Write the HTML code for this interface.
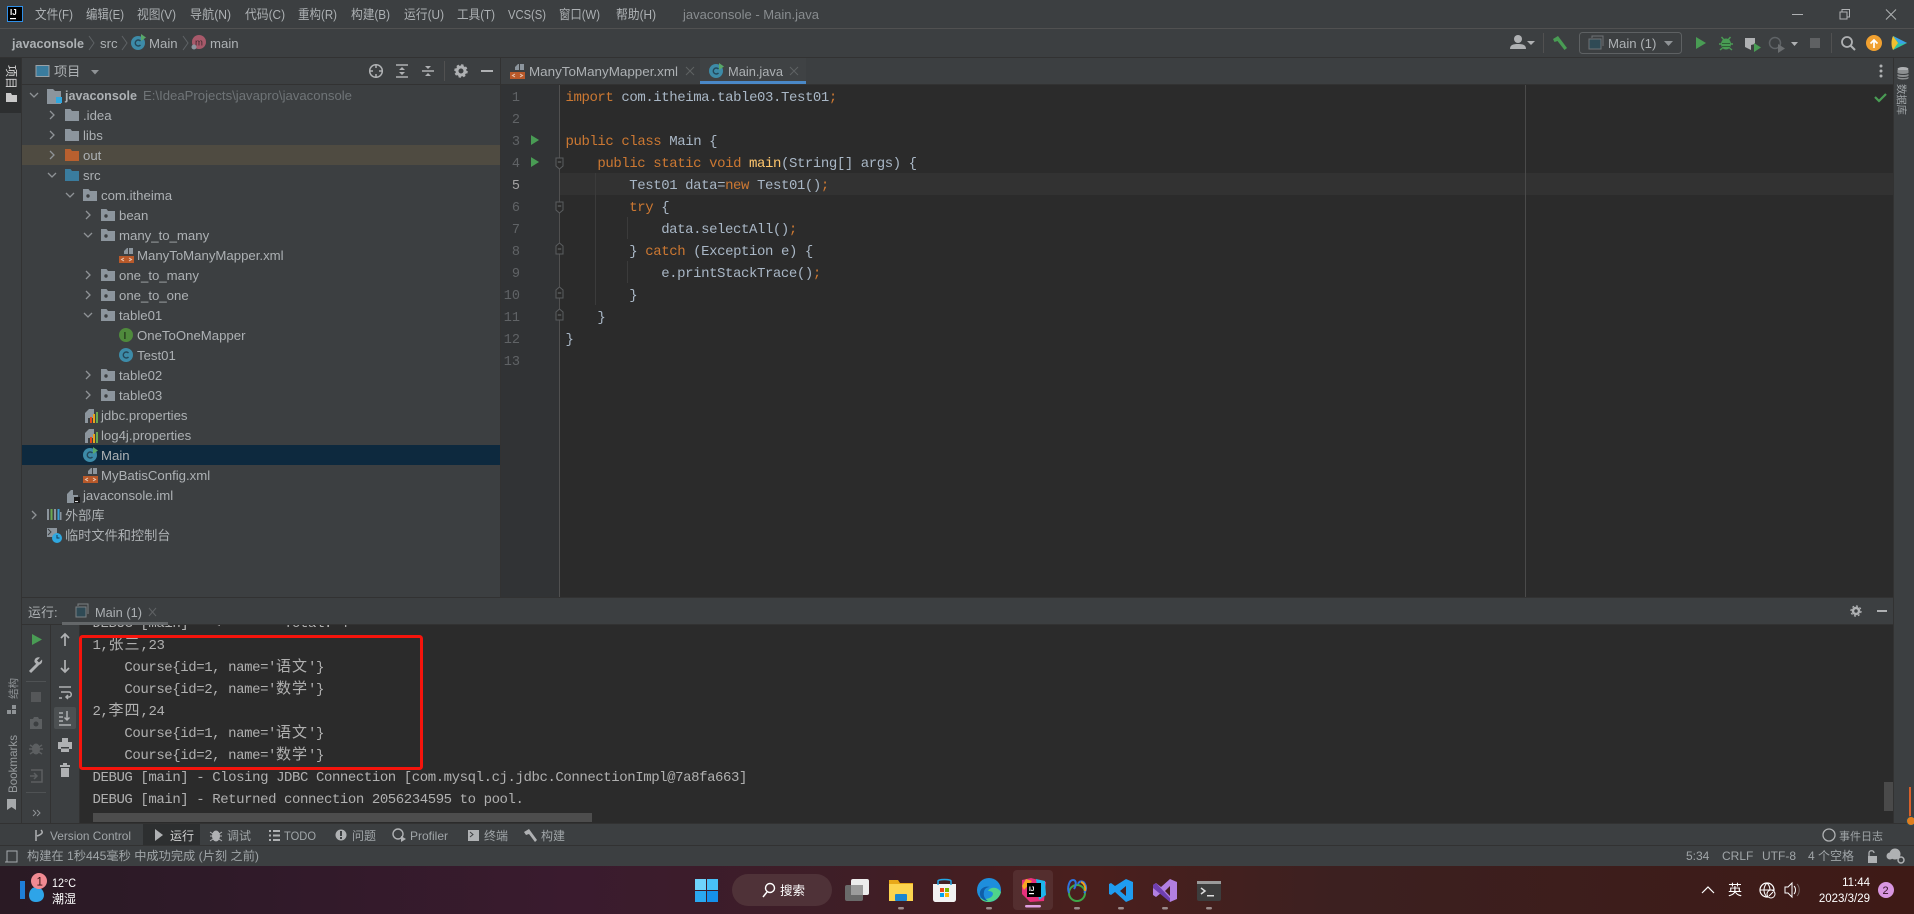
<!DOCTYPE html>
<html lang="zh"><head><meta charset="utf-8"><title>javaconsole - Main.java</title>
<style>
html,body{margin:0;padding:0;width:1914px;height:914px;overflow:hidden;background:#3c3f41}
svg{display:block;position:absolute;left:0;top:0}
text{font-family:"Liberation Sans","Noto Sans CJK SC",sans-serif;font-size:13.2px;fill:#adb1b4;white-space:pre}
.m{font-family:"Liberation Mono","Noto Sans CJK SC",monospace;font-size:14px;letter-spacing:-.42px;fill:#a9b7c6}
.k{fill:#cc7832}.f{fill:#ffc66d}
.n{font-family:"Liberation Mono",monospace;font-size:13.5px;fill:#606366;text-anchor:end}
.c{fill:#b0b0b0}
.z{font-size:15px;letter-spacing:1px}
.b{font-size:12px;fill:#a0a5a8}
.w{fill:#fff;font-size:12px}
</style></head><body>
<svg width="1914" height="914" viewBox="0 0 1914 914" xmlns="http://www.w3.org/2000/svg">
<defs>
<linearGradient id="tb" x1="0" x2="1" y1="0" y2="0">
<stop offset="0" stop-color="#2a1a24"/><stop offset=".1" stop-color="#2e1a28"/><stop offset=".3" stop-color="#3a1b2e"/><stop offset=".45" stop-color="#3f1e26"/><stop offset=".57" stop-color="#4a1f1d"/><stop offset=".7" stop-color="#3c2020"/><stop offset="1" stop-color="#3e1a16"/>
</linearGradient>
<symbol id="fo" viewBox="0 0 14 12" overflow="visible"><path d="M0 0h5.500l1.500 2h7v10H0z" fill="#8c959d"/></symbol>
<symbol id="pk" viewBox="0 0 14 12" overflow="visible"><path d="M0 0h5.500l1.500 2h7v10H0z" fill="#8c959d"/><circle cx="5" cy="7" r="1.700" fill="#3c3f41"/></symbol>
<symbol id="xm" viewBox="0 0 15 15" overflow="visible"><path d="M5 6V3l3-3h1v6zM10 0h4v6h-4z" fill="#8c959d"/><rect y="8" width="15" height="7" fill="#b8592a"/><path d="M5 10l-2.500 1.500L5 13M10 10l2.500 1.500L10 13" fill="none" stroke="#e8c9b5"/></symbol>
<symbol id="cc" viewBox="0 0 14 14" overflow="visible"><circle cx="7" cy="7" r="7" fill="#3d8ba8"/><path d="M9.500 5A3 3 0 1 0 9.500 9" fill="none" stroke="#24485a" stroke-width="1.400"/></symbol>
<symbol id="pr" viewBox="0 0 14 15" overflow="visible"><path d="M0 15V5l4-4h2v5h-3v9z M6 1h3v5H6z" fill="#8c959d"/><rect x="3" y="6" width="5" height="4" fill="#8c959d"/><rect x="5" y="9" width="2" height="6" fill="#e0481e"/><rect x="8" y="6" width="2" height="9" fill="#e8a41e"/><rect x="11" y="4" width="2" height="11" fill="#6aa84f"/></symbol>
<symbol id="ch" viewBox="0 0 10 10" overflow="visible"><path d="M3 1l4 4-4 4" fill="none" stroke="#8f9396" stroke-width="1.300"/></symbol>
<symbol id="cd" viewBox="0 0 10 10" overflow="visible"><path d="M1 3l4 4 4-4" fill="none" stroke="#8f9396" stroke-width="1.300"/></symbol>
<symbol id="fd" viewBox="0 0 10 22" overflow="visible"><path d="M1 6h7v8l-3.500 3L1 14z" fill="#2b2b2b" stroke="#5a5d5f"/><path d="M2.800 10h3.400" stroke="#6d7072"/></symbol>
<symbol id="fu" viewBox="0 0 10 22" overflow="visible"><path d="M1 14V6l3.500-3L8 6v8z" fill="#2b2b2b" stroke="#5a5d5f"/><path d="M2.800 9h3.400" stroke="#6d7072"/></symbol>
<symbol id="rn" viewBox="0 0 10 12" overflow="visible"><path d="M0 0l9 5.500L0 11z" fill="#499c54"/></symbol>
</defs>

<!-- Chrome backgrounds -->
<rect width="1914" height="866" fill="#3c3f41"/>
<rect y="28" width="1914" height="1" fill="#515151"/>
<rect y="57" width="1914" height="1" fill="#323232"/>
<rect x="0" y="58" width="21" height="55" fill="#2d2f30"/>
<rect x="21" y="58" width="1" height="765" fill="#323232"/>
<rect x="1893" y="58" width="1" height="765" fill="#323232"/>
<rect x="22" y="84" width="478" height="1" fill="#323232"/>
<rect x="22" y="145" width="478" height="20" fill="#4f4b41"/>
<rect x="22" y="445" width="478" height="20" fill="#0d293e"/>
<rect x="500" y="58" width="1" height="539" fill="#323232"/>

<!-- Editor -->
<rect x="501" y="84" width="1392" height="513" fill="#2b2b2b"/>
<rect x="501" y="84" width="1392" height="1" fill="#323232"/>
<rect x="501" y="85" width="58" height="512" fill="#313335"/>
<rect x="559" y="85" width="1" height="512" fill="#505050"/>
<rect x="560" y="173" width="1333" height="22" fill="#323232"/>
<rect x="1525" y="85" width="1" height="512" fill="#4a4a4a"/>
<rect x="595" y="173" width="1" height="132" fill="#3b3b3b"/>
<rect x="627" y="217" width="1" height="22" fill="#3b3b3b"/>
<rect x="627" y="261" width="1" height="22" fill="#3b3b3b"/>
<!-- tabs -->
<use href="#xm" x="510" y="64" width="15" height="15"/>
<text x="529" y="76" textLength="149" lengthAdjust="spacingAndGlyphs">ManyToManyMapper.xml</text>
<path d="M686 67l8 8m0-8l-8 8" stroke="#5f6264" stroke-width="1"/>
<rect x="700" y="58" width="106" height="26" fill="#3f4244"/>
<rect x="700" y="81" width="106" height="3" fill="#4a88c7"/>
<use href="#cc" x="709" y="64" width="14" height="14"/>
<path d="M719 63l5 3.500-5 3.500z" fill="#59a869"/>
<text x="728" y="76" textLength="55" lengthAdjust="spacingAndGlyphs">Main.java</text>
<path d="M790 67l8 8m0-8l-8 8" stroke="#5f6264" stroke-width="1"/>
<circle cx="1881" cy="66" r="1.500" fill="#afb1b3"/><circle cx="1881" cy="71" r="1.500" fill="#afb1b3"/><circle cx="1881" cy="76" r="1.500" fill="#afb1b3"/>
<path d="M1875 97l4 4 7-7" fill="none" stroke="#499c54" stroke-width="2.200"/>

<!-- Line numbers -->
<text class="n" x="520" y="101">1</text><text class="n" x="520" y="123">2</text><text class="n" x="520" y="145">3</text><text class="n" x="520" y="167">4</text><text class="n" x="520" y="189" style="fill:#a4a3a3">5</text><text class="n" x="520" y="211">6</text><text class="n" x="520" y="233">7</text><text class="n" x="520" y="255">8</text><text class="n" x="520" y="277">9</text><text class="n" x="520" y="299">10</text><text class="n" x="520" y="321">11</text><text class="n" x="520" y="343">12</text><text class="n" x="520" y="365">13</text>
<use href="#rn" x="531" y="135" width="9" height="11"/>
<use href="#rn" x="531" y="157" width="9" height="11"/>
<use href="#fd" x="555" y="152" width="10" height="22"/>
<use href="#fd" x="555" y="196" width="10" height="22"/>
<use href="#fu" x="555" y="240" width="10" height="22"/>
<use href="#fu" x="555" y="284" width="10" height="22"/>
<use href="#fu" x="555" y="306" width="10" height="22"/>

<!-- Code -->
<text class="m" x="565.500" y="101"><tspan class="k">import</tspan> com.itheima.table03.Test01<tspan class="k">;</tspan></text>
<text class="m" x="565.500" y="145"><tspan class="k">public class</tspan> Main {</text>
<text class="m" x="597.400" y="167"><tspan class="k">public static void</tspan> <tspan class="f">main</tspan>(String[] args) {</text>
<text class="m" x="629.300" y="189">Test01 data=<tspan class="k">new</tspan> Test01()<tspan class="k">;</tspan></text>
<text class="m" x="629.300" y="211"><tspan class="k">try</tspan> {</text>
<text class="m" x="661.200" y="233">data.selectAll()<tspan class="k">;</tspan></text>
<text class="m" x="629.300" y="255">} <tspan class="k">catch</tspan> (Exception e) {</text>
<text class="m" x="661.200" y="277">e.printStackTrace()<tspan class="k">;</tspan></text>
<text class="m" x="629.300" y="299">}</text>
<text class="m" x="597.400" y="321">}</text>
<text class="m" x="565.500" y="343">}</text>

<!-- Title bar -->
<rect x="7.500" y="6.500" width="15" height="15" fill="#000" stroke="#2f8fe8" stroke-width="1"/>
<text x="10" y="15" style="font-size:8px;font-weight:bold;fill:#fff">IJ</text><rect x="10" y="18" width="6" height="1.200" fill="#fff"/>
<text x="35" y="19" textLength="38" lengthAdjust="spacingAndGlyphs">文件(F)</text>
<text x="86" y="19" textLength="38" lengthAdjust="spacingAndGlyphs">编辑(E)</text>
<text x="137" y="19" textLength="39" lengthAdjust="spacingAndGlyphs">视图(V)</text>
<text x="190" y="19" textLength="41" lengthAdjust="spacingAndGlyphs">导航(N)</text>
<text x="245" y="19" textLength="40" lengthAdjust="spacingAndGlyphs">代码(C)</text>
<text x="298" y="19" textLength="39" lengthAdjust="spacingAndGlyphs">重构(R)</text>
<text x="351" y="19" textLength="39" lengthAdjust="spacingAndGlyphs">构建(B)</text>
<text x="404" y="19" textLength="40" lengthAdjust="spacingAndGlyphs">运行(U)</text>
<text x="457" y="19" textLength="38" lengthAdjust="spacingAndGlyphs">工具(T)</text>
<text x="508" y="19" textLength="38" lengthAdjust="spacingAndGlyphs">VCS(S)</text>
<text x="559" y="19" textLength="41" lengthAdjust="spacingAndGlyphs">窗口(W)</text>
<text x="616" y="19" textLength="40" lengthAdjust="spacingAndGlyphs">帮助(H)</text>
<text x="683" y="19" textLength="136" lengthAdjust="spacingAndGlyphs" style="fill:#888c8f;font-size:12.800px">javaconsole - Main.java</text>
<rect x="1792" y="14" width="11" height="1" fill="#afb1b3"/>
<path d="M1840 12h7v7h-7zM1842 12v-2.500h7.500v7.500H1847" fill="none" stroke="#afb1b3"/>
<path d="M1886 9.500l10 10m0-10l-10 10" stroke="#afb1b3"/>

<!-- Nav bar -->
<text x="12" y="48" textLength="72" lengthAdjust="spacingAndGlyphs" style="font-weight:bold">javaconsole</text>
<path d="M89 36l5 7-5 7M122 36l5 7-5 7M183 36l5 7-5 7" fill="none" stroke="#5f6366"/>
<text x="100" y="48">src</text>
<use href="#cc" x="131" y="36" width="14" height="14"/>
<path d="M141 34l5 3.500-5 3.500z" fill="#59a869"/>
<text x="149" y="48">Main</text>
<circle cx="199" cy="42" r="7" fill="#a8596a"/><text x="195" y="45.500" style="font-size:9.500px;fill:#3c2a2e">m</text>
<circle cx="194" cy="47" r="2.500" fill="#8c959d"/>
<text x="210" y="48">main</text>

<!-- Top right toolbar -->
<circle cx="1518" cy="39" r="4" fill="#afb1b3"/><path d="M1510 49c0-4 3-5 8-5s8 1 8 5z" fill="#afb1b3"/>
<path d="M1527 41h8l-4 4z" fill="#afb1b3"/>
<rect x="1543" y="33" width="1" height="20" fill="#515151"/>
<path d="M1553 39l5-3 9 12-2.500 2-7-9-3 1z" fill="#499c54"/>
<rect x="1579.500" y="32.500" width="102" height="21" rx="3" fill="none" stroke="#5e6163"/>
<rect x="1589" y="39" width="12" height="10" fill="#2f4a55" stroke="#6e7275"/><path d="M1592 38v-2h11v10" fill="none" stroke="#6e7275"/>
<text x="1608" y="48">Main (1)</text>
<path d="M1664 41h9l-4.500 5z" fill="#8f9396"/>
<path d="M1696 37l10 6-10 6z" fill="#499c54"/>
<ellipse cx="1726" cy="44" rx="5" ry="5.500" fill="#499c54"/><path d="M1721.500 37l2.500 3m6.500-3l-2.500 3M1719 44h14M1720 50l2.500-2m9.500 2l-2.500-2" stroke="#499c54" stroke-width="1.400"/><path d="M1722 43.500h8M1722 46.500h8" stroke="#2f5f36"/>
<path d="M1745 38h10v6l-4 1v5l-6-3z" fill="#afb1b3"/><path d="M1754 43l7 4.500-7 4.500z" fill="#499c54"/>
<circle cx="1775" cy="43" r="5.500" fill="none" stroke="#5f6366" stroke-width="1.500"/><path d="M1778 44l7 4.500-7 4.500z" fill="#6b6e70"/>
<path d="M1791 42h7l-3.500 4z" fill="#afb1b3"/>
<rect x="1810" y="38" width="10" height="10" fill="#5f6163"/>
<rect x="1831" y="33" width="1" height="20" fill="#515151"/>
<circle cx="1847" cy="42" r="5" fill="none" stroke="#afb1b3" stroke-width="1.800"/><path d="M1851 46l4 4" stroke="#afb1b3" stroke-width="2"/>
<circle cx="1874" cy="43" r="8" fill="#f0a030"/><path d="M1874 48v-8m-3.500 3.500l3.500-3.500 3.500 3.500" fill="none" stroke="#fff" stroke-width="1.700"/>
<path d="M1893 36l14 7-14 7z" fill="#2ec4a0"/><path d="M1893 36c-2 4-2 10 0 14l5-7z" fill="#f0c030"/><path d="M1893 36l14 7-7 1z" fill="#3ba0e8"/>

<!-- Project header -->
<rect x="36" y="65.500" width="13" height="11" fill="#3a7c9e" stroke="#9aa1a6"/>
<text x="54" y="76">项目</text>
<path d="M91 70h8l-4 4.500z" fill="#8f9396"/>
<circle cx="376" cy="71" r="6.300" fill="none" stroke="#afb1b3" stroke-width="1.500"/><path d="M376 64v4m0 6v4m-7-7h4m6 0h4" stroke="#afb1b3" stroke-width="1.500"/>
<path d="M396 65h12M396 77h12" stroke="#afb1b3" stroke-width="1.500"/><path d="M402 67l3 3h-6zM402 75l3-3h-6z" fill="#afb1b3"/>
<path d="M422 71h12" stroke="#afb1b3" stroke-width="1.500"/><path d="M428 69l-3-3h6zM428 73l-3 3h6z" fill="#afb1b3"/>
<rect x="444" y="61" width="1" height="20" fill="#515151"/>
<circle cx="461" cy="71" r="4" fill="none" stroke="#afb1b3" stroke-width="3"/><circle cx="461" cy="71" r="6" fill="none" stroke="#afb1b3" stroke-width="1.500" stroke-dasharray="2.500 2.200"/>
<rect x="481" y="70" width="12" height="2" fill="#afb1b3"/>

<!-- Left stripe -->
<text transform="translate(7 65) rotate(90)" style="font-size:12px;fill:#d6d6d6">项目</text>
<path d="M6 93h5l1 2h5v7H6z" fill="#c9c9c9"/>
<text transform="translate(17 699) rotate(-90)" style="font-size:10.500px;fill:#8f9396" textLength="21">结构</text>
<path d="M7 710h4v4H7zM12 710h4v4h-4zM12 705h4v4h-4z" fill="#8f9396"/>
<text transform="translate(17 793) rotate(-90)" textLength="58" lengthAdjust="spacingAndGlyphs" style="font-size:12px;fill:#969a9d">Bookmarks</text>
<path d="M7 799h9v11l-4.500-3-4.500 3z" fill="#a6a9ab"/>

<!-- Right stripe -->
<ellipse cx="1903" cy="69" rx="5.500" ry="2" fill="#afb1b3"/><path d="M1897.500 70v8c0 2 11 2 11 0v-8" fill="#8c8f91"/>
<path d="M1897.500 73c0 2 11 2 11 0M1897.500 76c0 2 11 2 11 0" stroke="#3c3f41" fill="none"/>
<text transform="translate(1898 84) rotate(90)" style="font-size:10.500px;fill:#a0a5a8" textLength="31">数据库</text>

<!-- Tree -->
<use href="#cd" x="29" y="90" width="10" height="10"/>
<path d="M47 89h6l2 2h6v13H47z" fill="#8c959d"/><rect x="56" y="97" width="6" height="6" fill="#2fa8e0"/>
<text x="65" y="100" textLength="72" lengthAdjust="spacingAndGlyphs" style="font-weight:bold">javaconsole</text>
<text x="143" y="100" textLength="209" lengthAdjust="spacingAndGlyphs" style="fill:#6f7477;font-size:12.800px">E:\IdeaProjects\javapro\javaconsole</text>

<use href="#ch" x="47" y="110" width="10" height="10"/><use href="#fo" x="65" y="109" width="14" height="12"/><text x="83" y="120">.idea</text>
<use href="#ch" x="47" y="130" width="10" height="10"/><use href="#fo" x="65" y="129" width="14" height="12"/><text x="83" y="140">libs</text>
<use href="#ch" x="47" y="150" width="10" height="10"/><path d="M65 149h5.500l1.500 2h7v10H65z" fill="#b8602f"/><text x="83" y="160">out</text>
<use href="#cd" x="47" y="170" width="10" height="10"/><path d="M65 169h5.500l1.500 2h7v10H65z" fill="#3a7c9e"/><text x="83" y="180">src</text>
<use href="#cd" x="65" y="190" width="10" height="10"/><use href="#pk" x="83" y="189" width="14" height="12"/><text x="101" y="200">com.itheima</text>
<use href="#ch" x="83" y="210" width="10" height="10"/><use href="#pk" x="101" y="209" width="14" height="12"/><text x="119" y="220">bean</text>
<use href="#cd" x="83" y="230" width="10" height="10"/><use href="#pk" x="101" y="229" width="14" height="12"/><text x="119" y="240">many_to_many</text>
<use href="#xm" x="119" y="248" width="15" height="15"/><text x="137" y="260">ManyToManyMapper.xml</text>
<use href="#ch" x="83" y="270" width="10" height="10"/><use href="#pk" x="101" y="269" width="14" height="12"/><text x="119" y="280">one_to_many</text>
<use href="#ch" x="83" y="290" width="10" height="10"/><use href="#pk" x="101" y="289" width="14" height="12"/><text x="119" y="300">one_to_one</text>
<use href="#cd" x="83" y="310" width="10" height="10"/><use href="#pk" x="101" y="309" width="14" height="12"/><text x="119" y="320">table01</text>
<circle cx="126" cy="335" r="7" fill="#4f8a3c"/><text x="123.500" y="339" style="font-size:10px;font-weight:bold;fill:#26401e">I</text><text x="137" y="340">OneToOneMapper</text>
<use href="#cc" x="119" y="348" width="14" height="14"/><text x="137" y="360">Test01</text>
<use href="#ch" x="83" y="370" width="10" height="10"/><use href="#pk" x="101" y="369" width="14" height="12"/><text x="119" y="380">table02</text>
<use href="#ch" x="83" y="390" width="10" height="10"/><use href="#pk" x="101" y="389" width="14" height="12"/><text x="119" y="400">table03</text>
<use href="#pr" x="85" y="408" width="14" height="15"/><text x="101" y="420">jdbc.properties</text>
<use href="#pr" x="85" y="428" width="14" height="15"/><text x="101" y="440">log4j.properties</text>
<use href="#cc" x="83" y="448" width="14" height="14"/><path d="M93 447l5 3.500-5 3.500z" fill="#59a869"/><text x="101" y="460">Main</text>
<use href="#xm" x="83" y="468" width="15" height="15"/><text x="101" y="480">MyBatisConfig.xml</text>
<path d="M67 503v-9l4-4h2v5h5v8z" fill="#8c959d"/><rect x="74" y="497" width="6" height="6" fill="#1b1b1b"/><rect x="75" y="501" width="3" height="1" fill="#ddd"/><text x="83" y="500">javaconsole.iml</text>
<use href="#ch" x="29" y="510" width="10" height="10"/>
<rect x="47" y="509" width="2" height="11" fill="#8c959d"/><rect x="50.500" y="509" width="2" height="11" fill="#6aa84f"/><rect x="54" y="509" width="2" height="11" fill="#8c959d"/><rect x="57.500" y="509" width="2" height="11" fill="#389fd6"/><rect x="60" y="512" width="1.500" height="8" fill="#8c959d"/>
<text x="65" y="520">外部库</text>
<rect x="47" y="528" width="10" height="9" fill="#8c959d"/><path d="M48 529l3 3-3 3" stroke="#3c3f41" fill="none"/><circle cx="57" cy="538" r="5" fill="#2fa8e0"/><path d="M57 535v3h2.500" stroke="#16394f" fill="none"/>
<text x="65" y="540">临时文件和控制台</text>

<!-- Run panel -->
<rect x="22" y="597" width="1871" height="1" fill="#323232"/>
<text x="28" y="617" style="font-size:13px">运行:</text>
<rect x="76" y="607" width="10" height="10" fill="#2f4a55" stroke="#7b8083"/><path d="M78 606v-2h10v10" fill="none" stroke="#7b8083"/>
<text x="95" y="617" textLength="47" lengthAdjust="spacingAndGlyphs" style="font-size:13px">Main (1)</text>
<path d="M149 608l7 8m0-8l-7 8" stroke="#5f6264"/>
<rect x="22" y="624" width="1871" height="1" fill="#323232"/>
<circle cx="1856" cy="611" r="3" fill="none" stroke="#afb1b3" stroke-width="2.500"/><circle cx="1856" cy="611" r="5" fill="none" stroke="#afb1b3" stroke-width="1.300" stroke-dasharray="2 1.900"/>
<rect x="1877" y="610" width="10" height="2" fill="#afb1b3"/>

<rect x="80" y="625" width="1813" height="198" fill="#2b2b2b"/>
<rect x="50" y="625" width="1" height="198" fill="#323232"/>
<rect x="79" y="625" width="1" height="198" fill="#323232"/>
<rect x="1884" y="782" width="9" height="29" fill="#4a4a4a"/>
<rect x="93" y="813" width="499" height="9" fill="#4d4d4d"/>

<clipPath id="cl"><rect x="80" y="625" width="1813" height="198"/></clipPath>
<g clip-path="url(#cl)">
<text class="m c" x="92.500" y="627">DEBUG [main] - &lt;==      Total: 4</text>
<text class="m c" x="92.500" y="649">1,<tspan class="z" x="108.500">张三</tspan><tspan x="140.500">,23</tspan></text>
<text class="m c" x="124.400" y="671">Course{id=1, name='<tspan class="z" x="276">语文</tspan><tspan x="308">'}</tspan></text>
<text class="m c" x="124.400" y="693">Course{id=2, name='<tspan class="z" x="276">数学</tspan><tspan x="308">'}</tspan></text>
<text class="m c" x="92.500" y="715">2,<tspan class="z" x="108.500">李四</tspan><tspan x="140.500">,24</tspan></text>
<text class="m c" x="124.400" y="737">Course{id=1, name='<tspan class="z" x="276">语文</tspan><tspan x="308">'}</tspan></text>
<text class="m c" x="124.400" y="759">Course{id=2, name='<tspan class="z" x="276">数学</tspan><tspan x="308">'}</tspan></text>
<text class="m c" x="92.500" y="781">DEBUG [main] - Closing JDBC Connection [com.mysql.cj.jdbc.ConnectionImpl@7a8fa663]</text>
<text class="m c" x="92.500" y="803">DEBUG [main] - Returned connection 2056234595 to pool.</text>
</g>
<rect x="62" y="622" width="106" height="3" fill="#646769"/>
<rect x="80.500" y="636.500" width="341" height="132" rx="2" fill="none" stroke="#f5140c" stroke-width="3"/>

<!-- Run toolbars -->
<path d="M32 634l10 5.500-10 5.500z" fill="#499c54"/>
<path d="M30 672l8-8" stroke="#afb1b3" stroke-width="3"/><path d="M42 659.500l-3 3-2-2 3-3c-3-1-6 1-5.500 4.500l2.500 3c3 .5 6-2 5-5.500z" fill="#afb1b3"/>
<rect x="26" y="681" width="20" height="1" fill="#4f5254"/>
<rect x="31" y="692" width="10" height="10" fill="#555759"/>
<path d="M30 719h3l1-2h4l1 2h3v10H30z" fill="#5c5f61"/><circle cx="36" cy="724" r="2.500" fill="#3c3f41"/>
<ellipse cx="36" cy="749" rx="4" ry="5.500" fill="#5c5f61"/><path d="M30 745l3 2m9-2l-3 2M29 749h14M30 754l3-2m9 2l-3-2" stroke="#5c5f61" stroke-width="1.500"/>
<path d="M31 770h11v12H31M30 776h7m-3-3l3 3-3 3" fill="none" stroke="#5c5f61" stroke-width="1.500"/>
<rect x="26" y="792" width="20" height="1" fill="#4f5254"/>
<path d="M33 810l3 3-3 3M37 810l3 3-3 3" fill="none" stroke="#8f9396"/>

<path d="M65 646v-12m-4 4l4-4 4 4" fill="none" stroke="#afb1b3" stroke-width="1.700"/>
<path d="M65 660v12m-4-4l4 4 4-4" fill="none" stroke="#afb1b3" stroke-width="1.700"/>
<path d="M59 687h12M61 692h8c3 0 3 5 0 5h-3m2-2l-2 2 2 2M59 698h3" fill="none" stroke="#afb1b3" stroke-width="1.500"/>
<rect x="54" y="707" width="22" height="22" rx="2" fill="#4c5052"/>
<path d="M59 713h4M59 717h4M59 721h4M59 725h12M67 711v9m-2.500-2.500l2.500 2.500 2.500-2.500" fill="none" stroke="#afb1b3" stroke-width="1.500"/>
<path d="M62 738h6v4h4v7h-3v3h-8v-3h-3v-7h4z" fill="#afb1b3"/><rect x="61" y="747" width="8" height="1.500" fill="#3c3f41"/>
<path d="M60 767h10v-2h-10zM61 768h8v9h-8zM63 763h4v2h-4z" fill="#afb1b3"/>

<!-- Bottom tool window bar -->
<rect y="823" width="1914" height="1" fill="#323232"/>
<rect y="845" width="1914" height="1" fill="#323232"/>
<rect x="143" y="824" width="57" height="21" fill="#2d2f30"/>
<path d="M36 830v11M41 830c2 2 2 4-4 6" fill="none" stroke="#afb1b3" stroke-width="1.500"/>
<text class="b" x="50" y="840" textLength="81" lengthAdjust="spacingAndGlyphs">Version Control</text>
<path d="M155 829l8 6-8 6z" fill="#afb1b3"/><text class="b" x="170" y="840" style="fill:#d0d0d0">运行</text>
<ellipse cx="216" cy="836" rx="4" ry="5.500" fill="#afb1b3"/><path d="M210 832l3 2m9-2l-3 2M210 836h12M210 841l3-2m9 2l-3-2" stroke="#afb1b3"/><text class="b" x="227" y="840">调试</text>
<path d="M269 830h2v2h-2zM273 830h7v2h-7zM269 834.500h2v2h-2zM273 834.500h7v2h-7zM269 839h2v2h-2zM273 839h7v2h-7z" fill="#afb1b3"/><text class="b" x="284" y="840" textLength="32" lengthAdjust="spacingAndGlyphs">TODO</text>
<circle cx="341" cy="835" r="5.500" fill="#afb1b3"/><rect x="340" y="831" width="2" height="5" fill="#3c3f41"/><rect x="340" y="837" width="2" height="2" fill="#3c3f41"/><text class="b" x="352" y="840">问题</text>
<circle cx="398" cy="834" r="5" fill="none" stroke="#afb1b3" stroke-width="1.400"/><path d="M401 836l5 3-5 3z" fill="#afb1b3"/><text class="b" x="410" y="840" textLength="38" lengthAdjust="spacingAndGlyphs">Profiler</text>
<rect x="468" y="830" width="11" height="11" fill="#afb1b3"/><path d="M470 832l3 2.500-3 2.500" stroke="#3c3f41" fill="none"/><text class="b" x="484" y="840">终端</text>
<path d="M524 832l5-3 8 11-2 2-6-8-3 1z" fill="#afb1b3"/><text class="b" x="541" y="840">构建</text>
<circle cx="1829" cy="835" r="6" fill="none" stroke="#afb1b3" stroke-width="1.300"/>
<text class="b" x="1839" y="840" style="font-size:11px">事件日志</text>
<path d="M1910 787v33" stroke="#d8602a" stroke-width="2"/>
<circle cx="1911" cy="821" r="4.500" fill="#e07f1f" stroke="#2f4a55"/>

<!-- Status bar -->
<rect x="7" y="851" width="10" height="11" fill="none" stroke="#a6abae"/><path d="M5 862h8" stroke="#a6abae"/>
<text class="b" x="27" y="860" textLength="232" lengthAdjust="spacingAndGlyphs">构建在 1秒445毫秒 中成功完成 (片刻 之前)</text>
<text class="b" x="1686" y="860">5:34</text><text class="b" x="1722" y="860">CRLF</text><text class="b" x="1762" y="860">UTF-8</text><text class="b" x="1808" y="860">4 个空格</text>
<rect x="1868" y="856" width="9" height="7" fill="#afb1b3"/><path d="M1869 856v-3c0-3 5-3 5 0" fill="none" stroke="#afb1b3" stroke-width="1.300"/>
<circle cx="1895" cy="854" r="5.500" fill="#afb1b3"/><circle cx="1890" cy="856" r="3.500" fill="#afb1b3"/><circle cx="1901" cy="860" r="3" fill="none" stroke="#afb1b3" stroke-width="1.500"/>

<!-- Taskbar -->
<rect y="866" width="1914" height="48" fill="url(#tb)"/>
<rect x="20" y="881" width="5" height="18" fill="#1f7fd8"/>
<path d="M36 887c5 0 8 4 8 8s-3 7-8 7-7-3-7-7 3-8 7-8z" fill="#2ea4e8"/>
<circle cx="39" cy="881" r="8" fill="#f08a92"/><text x="36.500" y="885.500" style="font-size:11.500px;fill:#311">1</text>
<text class="w" x="52" y="887" style="font-size:11.500px" textLength="24" lengthAdjust="spacingAndGlyphs">12°C</text>
<text class="w" x="52" y="903" style="font-size:12px">潮湿</text>

<rect x="695" y="879" width="11" height="11" fill="#6fd3fb"/><rect x="707" y="879" width="11" height="11" fill="#48c0f7"/><rect x="695" y="891" width="11" height="11" fill="#2aa8f0"/><rect x="707" y="891" width="11" height="11" fill="#1590ea"/>
<rect x="732" y="874" width="100" height="32" rx="16" fill="#4f3238"/>
<circle cx="770" cy="888" r="4.500" fill="none" stroke="#fff" stroke-width="1.400"/><path d="M767 892l-4 5" stroke="#fff" stroke-width="1.500"/>
<text class="w" x="780" y="895" style="font-size:12.500px">搜索</text>

<rect x="845" y="885" width="18" height="16" rx="2" fill="#6a6a6a"/><rect x="851" y="879" width="18" height="16" rx="2" fill="#ececec"/><rect x="851" y="885" width="12" height="10" fill="#9c9c9c"/>
<path d="M889 880h9l2 3h13v18h-24z" fill="#e8a818"/><rect x="889" y="884" width="24" height="17" fill="#fcd44f"/><rect x="895" y="894" width="12" height="7" rx="1" fill="#1c86d0"/>
<path d="M933 884h23v15c0 2-1 3-3 3h-17c-2 0-3-1-3-3z" fill="#f2f2f2"/><path d="M938 885v-4c0-2 13-2 13 0v4" fill="none" stroke="#22a8e8" stroke-width="1.500"/>
<rect x="940" y="888" width="4" height="4" fill="#e8481c"/><rect x="945" y="888" width="4" height="4" fill="#7db700"/><rect x="940" y="893" width="4" height="4" fill="#00a4ef"/><rect x="945" y="893" width="4" height="4" fill="#ffb900"/>
<circle cx="989" cy="890" r="12" fill="#1e8edc"/><path d="M1001 892c-1 5-6 10-13 10 -3 0-6-1-8-4 4 2 12 1 13-4 0-2-2-3-5-3 2-4 9-5 13 1z" fill="#4fd48a"/><path d="M984 892c0-3 3-5 6-5-3-1-9 0-10 5s3 9 8 9c-3-2-5-5-4-9z" fill="#0f5ea8"/>
<rect x="1013" y="870" width="40" height="40" rx="4" fill="#fff" fill-opacity=".07"/>
<path d="M1022 880l9-2 15 4-2 19-14 1-8-8z" fill="#e8307c"/><path d="M1036 879l9 2 1 14-7 5z" fill="#1db5ec"/><path d="M1022 886l4-7 6 2-8 9z" fill="#f5a623"/>
<rect x="1027" y="883" width="14" height="14" fill="#000"/><text x="1029" y="891" style="font-size:6.500px;fill:#fff;font-weight:bold">IJ</text><rect x="1029" y="893" width="5" height="1.200" fill="#fff"/>
<rect x="1025" y="905" width="16" height="2.500" rx="1.200" fill="#e0a0e0"/>
<ellipse cx="1077" cy="893" rx="8" ry="8" fill="none" stroke="#3ea848" stroke-width="2"/><path d="M1069 893c-2-5 0-13 4-13s3 6 1 9M1078 884c1-3 5-4 7 0 2 3 1 7-1 9" fill="none" stroke="#2f74e0" stroke-width="2"/><path d="M1081 882c3 1 5 5 4 9" fill="none" stroke="#f0a020" stroke-width="2"/>
<path d="M1126 879l7 3v17l-7 3-11-10-4 3-2-1v-10l2-1 4 3zM1126 886l-6 5 6 5z" fill="#1f9cf0" fill-rule="evenodd"/>
<path d="M1170 879l7 3v17l-7 3-9-9-5 4-3-2v-10l3-2 5 4zM1170 886l-5 5 5 5z" fill="#b27fe0" fill-rule="evenodd"/><path d="M1153 885l3-2 14 15v4l-17-14z" fill="#6f3fb0"/>
<rect x="1197" y="881" width="24" height="20" rx="2" fill="#3d3d3d"/><rect x="1197" y="881" width="24" height="3" fill="#9a9a9a"/><path d="M1201 888l4 3-4 3" fill="none" stroke="#ddd" stroke-width="1.500"/><rect x="1207" y="895" width="7" height="1.500" fill="#ddd"/>
<g fill="#9a8a8a"><rect x="898" y="907" width="6" height="2.500" rx="1.200"/><rect x="986" y="907" width="6" height="2.500" rx="1.200"/><rect x="1074" y="907" width="6" height="2.500" rx="1.200"/><rect x="1118" y="907" width="6" height="2.500" rx="1.200"/><rect x="1162" y="907" width="6" height="2.500" rx="1.200"/><rect x="1206" y="907" width="6" height="2.500" rx="1.200"/></g>

<path d="M1702 893l6-6 6 6" fill="none" stroke="#fff" stroke-width="1.200"/>
<text class="w" x="1728" y="895" style="font-size:14px">英</text>
<circle cx="1767" cy="890" r="7" fill="none" stroke="#fff" stroke-width="1.200"/><path d="M1760 890h14M1767 883c-4 4-4 10 0 14M1767 883c4 4 4 10 0 14" fill="none" stroke="#fff"/><circle cx="1771" cy="894" r="4" fill="#3e1a16" stroke="#fff"/><path d="M1769 896l4-4" stroke="#fff"/>
<path d="M1785 887h3l4-4v14l-4-4h-3z" fill="none" stroke="#fff"/><path d="M1794 886c2 2 2 6 0 8" fill="none" stroke="#fff"/><path d="M1797 884c3 3 3 9 0 12" fill="none" stroke="#7a6a66"/>
<text class="w" x="1870" y="886" text-anchor="end" style="font-size:11.500px">11:44</text>
<text class="w" x="1870" y="902" text-anchor="end" style="font-size:11.500px">2023/3/29</text>
<circle cx="1886" cy="890" r="8" fill="#d896e0"/><text x="1882.500" y="894" style="font-size:11px;fill:#312">2</text>
</svg>
</body></html>
